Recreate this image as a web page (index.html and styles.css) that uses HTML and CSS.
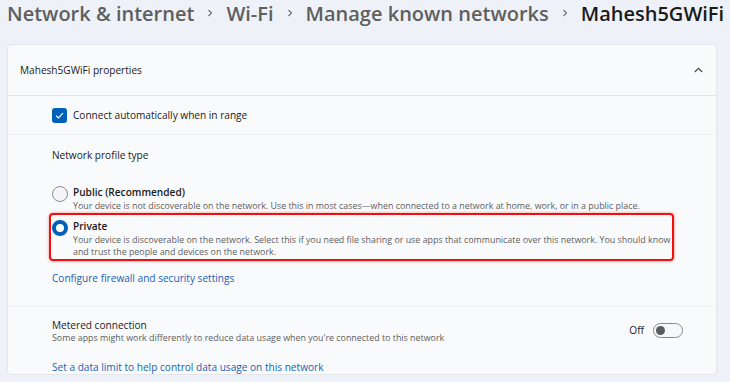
FILE: index.html
```html
<!DOCTYPE html>
<html lang="en">
<head>
    <meta charset="UTF-8">
    <meta name="viewport" content="width=device-width, initial-scale=1.0">
    <title>Mahesh5GWiFi</title>
    <link rel="stylesheet" href="styles.css">
</head>
<body>

<nav class="breadcrumb">
    <span class="crumb">Network &amp; internet</span>
    <svg class="crumb-sep" width="6" height="8" viewBox="0 0 6 8"><path d="M1.5 1 L4.5 4 L1.5 7" fill="none" stroke="#6b6b6b" stroke-width="1.1"/></svg>
    <span class="crumb">Wi-Fi</span>
    <svg class="crumb-sep" width="6" height="8" viewBox="0 0 6 8"><path d="M1.5 1 L4.5 4 L1.5 7" fill="none" stroke="#6b6b6b" stroke-width="1.1"/></svg>
    <span class="crumb">Manage known networks</span>
    <svg class="crumb-sep" width="6" height="8" viewBox="0 0 6 8"><path d="M1.5 1 L4.5 4 L1.5 7" fill="none" stroke="#6b6b6b" stroke-width="1.1"/></svg>
    <span class="crumb current">Mahesh5GWiFi</span>
</nav>

<div class="card">
    <div class="card-header">
        <span>Mahesh5GWiFi properties</span>
        <svg width="9" height="6" viewBox="0 0 9 6"><path d="M0.8 5 L4.5 1.3 L8.2 5" fill="none" stroke="#444" stroke-width="1.1"/></svg>
    </div>

    <div class="row check-row">
        <span class="checkbox">
            <svg width="9" height="7" viewBox="0 0 9 7"><path d="M1 3.6 L3.4 6 L8 1.2" fill="none" stroke="#fff" stroke-width="1.2"/></svg>
        </span>
        <span>Connect automatically when in range</span>
    </div>

    <div class="row profile">
        <div class="label">Network profile type</div>

        <div class="option public">
            <span class="radio"></span>
            <div class="option-text">
                <div class="option-title">Public (Recommended)</div>
                <div class="desc">Your device is not discoverable on the network. Use this in most cases—when connected to a network at home, work, or in a public place.</div>
            </div>
        </div>

        <div class="option private">
            <span class="radio checked"></span>
            <div class="option-text">
                <div class="option-title">Private</div>
                <div class="desc">Your device is discoverable on the network. Select this if you need file sharing or use apps that communicate over this network. You should know<br>and trust the people and devices on the network.</div>
            </div>
        </div>

        <a class="link firewall" href="#">Configure firewall and security settings</a>
    </div>

    <div class="row metered">
        <div class="metered-text">
            <div class="label">Metered connection</div>
            <div class="desc">Some apps might work differently to reduce data usage when you're connected to this network</div>
        </div>
        <div class="switch">
            <span>Off</span>
            <span class="toggle"><span class="knob"></span></span>
        </div>
    </div>

    <div class="row data-limit">
        <a class="link" href="#">Set a data limit to help control data usage on this network</a>
    </div>
</div>

</body>
</html>
```

FILE: styles.css
```css
body {
    font-family: "Open Sans", "Noto Sans", sans-serif;
    background-color: #eef2f8;
    color: #1b1b1b;
    margin: 0;
    overflow: hidden;
}

/* breadcrumb title */
.breadcrumb {
    display: flex;
    align-items: center;
    gap: 13px;
    height: 28px;
    line-height: 28px;
    padding-left: 7px;
    margin-bottom: 16px;
    white-space: nowrap;
}

.crumb {
    font-size: 20px;
    font-weight: 600;
    color: #5f5f5f;
}

.crumb.current {
    color: #1a1a1a;
}

.crumb-sep {
    margin-top: -2px;
}

/* properties card */
.card {
    margin-left: 7px;
    width: 708px;
    background-color: #f9fafc;
    border: 1px solid #e4e6ea;
    border-radius: 4px;
    font-size: 10.1px;
}

.card-header {
    display: flex;
    justify-content: space-between;
    align-items: center;
    height: 50px;
    padding: 0 13px 0 12px;
    border-bottom: 1px solid #e2e4e8;
}

.row {
    padding: 0 45px 0 44px;
}

.check-row {
    display: flex;
    align-items: center;
    gap: 6px;
    height: 38px;
    border-bottom: 1px solid #eef0f3;
}

.checkbox {
    display: flex;
    align-items: center;
    justify-content: center;
    width: 15px;
    height: 15px;
    background-color: #005fb8;
    border-radius: 3px;
}

.profile {
    padding-top: 13px;
    padding-bottom: 21px;
    border-bottom: 1px solid #eef0f3;
}

.label {
    line-height: 14px;
}

.option {
    display: flex;
    gap: 5px;
}

.option.public {
    margin-top: 23px;
}

.option.private {
    margin: 1px -3px 0 -3px;
    padding: 4px 1px 1px 1px;
    border: 2px solid #f01010;
    border-radius: 4px;
    box-shadow: 0 0 3px rgba(240, 16, 16, 0.5);
}

.radio {
    flex: none;
    box-sizing: border-box;
    width: 16px;
    height: 16px;
    margin-top: 0.5px;
    border: 1px solid #8c8c8c;
    border-radius: 50%;
    background-color: #f4f5f7;
}

.radio.checked {
    border: 4.5px solid #005fb8;
    background-color: #ffffff;
}

.option-title {
    font-weight: 600;
    line-height: 15px;
}

.desc {
    font-size: 8.9px;
    line-height: 12px;
    color: #5e5e5e;
}

.link {
    color: #1a5fb4;
    text-decoration: none;
    line-height: 14px;
}

.firewall {
    display: inline-block;
    margin-top: 10px;
}

.metered {
    display: flex;
    justify-content: space-between;
    align-items: center;
    padding: 11px 33px 0 44px;
}

.switch {
    display: flex;
    align-items: center;
    gap: 9px;
    margin-top: -2px;
}

.toggle {
    box-sizing: border-box;
    display: flex;
    align-items: center;
    width: 30px;
    height: 15px;
    padding-left: 2px;
    border: 1px solid #8a8a8a;
    border-radius: 8px;
    background-color: #f6f7f8;
}

.knob {
    width: 9px;
    height: 9px;
    border-radius: 50%;
    background-color: #5b5b5b;
}

.data-limit {
    padding-top: 16px;
}
```
